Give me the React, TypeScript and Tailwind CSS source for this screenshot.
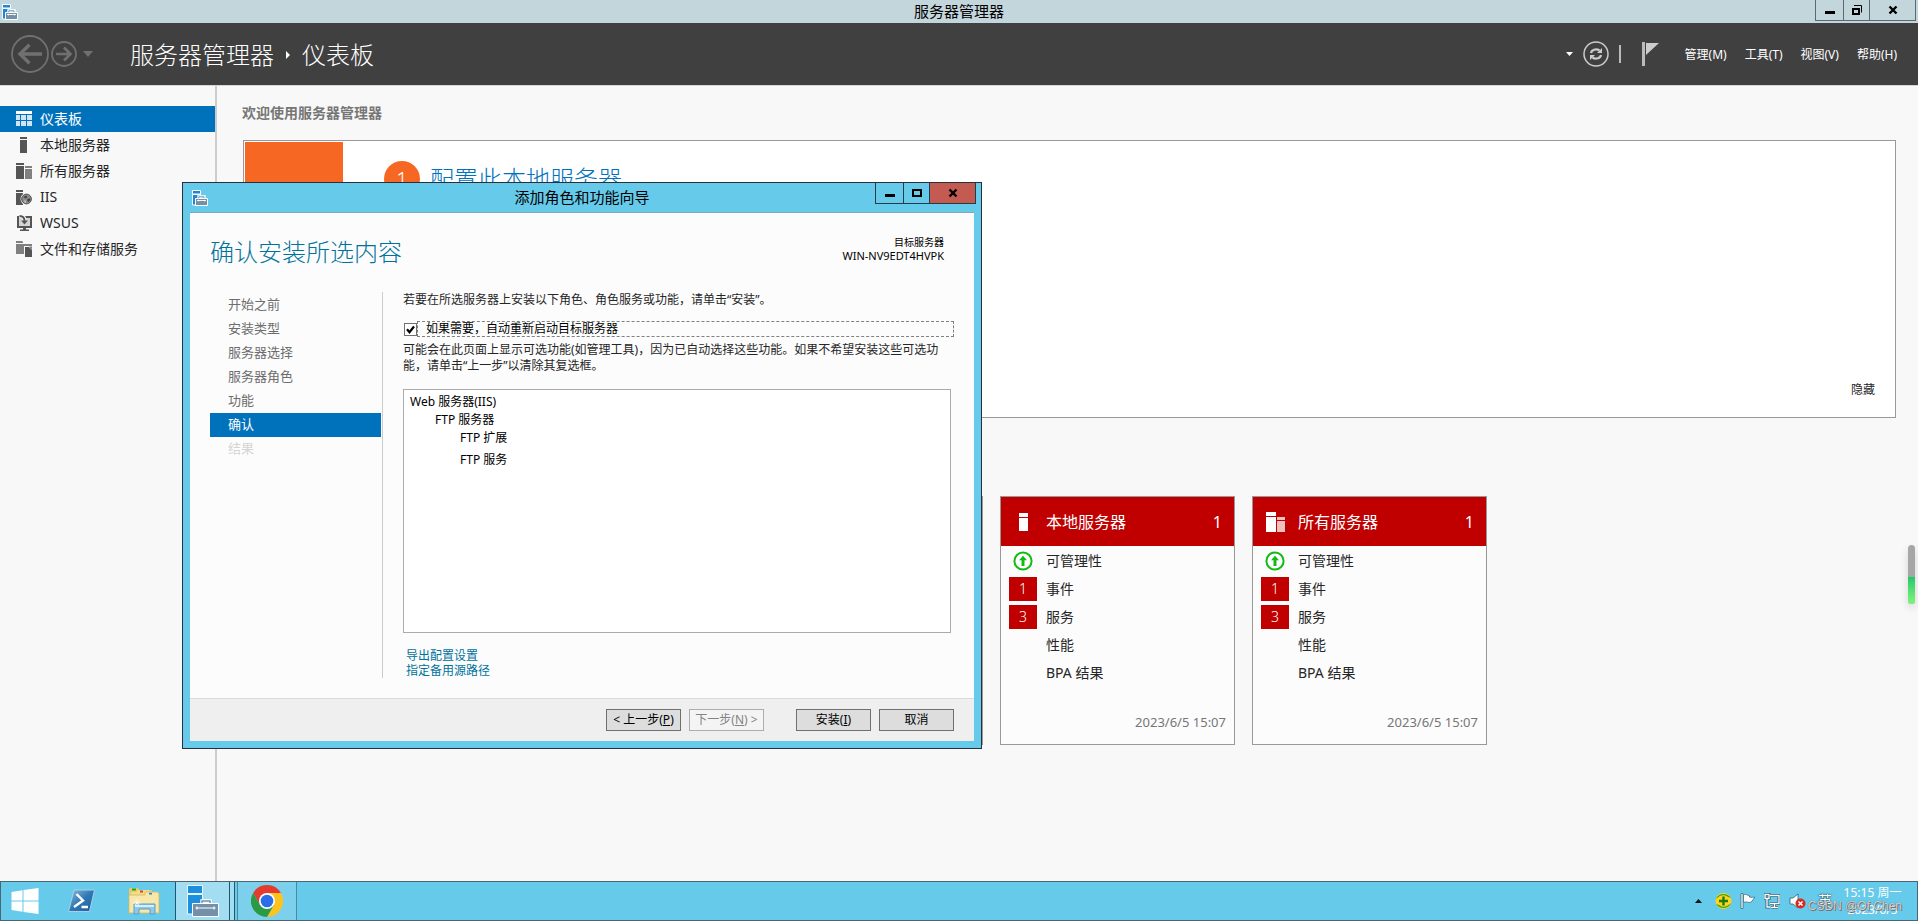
import type { ReactNode } from 'react'
import clsx from 'clsx'

const NAV_ITEMS = [
  { id: 'dashboard', label: '仪表板', active: true },
  { id: 'local', label: '本地服务器' },
  { id: 'all', label: '所有服务器' },
  { id: 'iis', label: 'IIS' },
  { id: 'wsus', label: 'WSUS' },
  { id: 'files', label: '文件和存储服务' },
]

const MENUS = ['管理(M)', '工具(T)', '视图(V)', '帮助(H)']

const STEPS = [
  { label: '开始之前' },
  { label: '安装类型' },
  { label: '服务器选择' },
  { label: '服务器角色' },
  { label: '功能' },
  { label: '确认', current: true },
  { label: '结果', disabled: true },
]

const TILES = [
  { id: 'local', title: '本地服务器', count: 1 },
  { id: 'all', title: '所有服务器', count: 1 },
]

const TILE_ROWS = [
  { label: '可管理性', ok: true },
  { label: '事件', badge: 1 },
  { label: '服务', badge: 3 },
  { label: '性能' },
  { label: 'BPA 结果' },
]

/* ── Icons ── */

function ToolboxIcon({ className }: { className?: string }) {
  return (
    <svg viewBox="0 0 16 16" className={className} aria-hidden="true">
      <path d="M0.500 0.500h8v3.500h-8zM0.500 4.500h8v10.500h-8z" fill="#1e87d6" stroke="#fff" />
      <path d="M6.500 8v-1.500h6V8" fill="none" stroke="#fff" strokeWidth="2.400" />
      <path d="M3.500 8.500h12v7h-12z" fill="#7390a8" stroke="#fff" />
      <path d="M6.800 8.200V6.800h5.200v1.400" fill="none" stroke="#7390a8" />
      <path d="M5 10.500h9M6.500 9.800v1.600M12.500 9.800v1.600" stroke="#fff" strokeWidth="0.900" />
    </svg>
  )
}

function NavIcon({ id }: { id: string }) {
  switch (id) {
    case 'dashboard':
      return (
        <svg width="16" height="16" viewBox="0 0 16 16" aria-hidden="true">
          <path fill="#fff" d="M0 0h16v3H0z" />
          <path fill="#cfe4f4" d="M0 4h4v5H0zM5 4h5v5H5zM11 4h5v5h-5zM0 10h4v5H0zM5 10h5v5H5zM11 10h5v5h-5z" />
        </svg>
      )
    case 'local':
      return (
        <svg width="16" height="16" viewBox="0 0 16 16" aria-hidden="true">
          <path fill="#555" d="M4 0h7v2H4zM4 3h7v13H4z" />
        </svg>
      )
    case 'all':
      return (
        <svg width="16" height="16" viewBox="0 0 16 16" aria-hidden="true">
          <path fill="#555" d="M0 0h8v2H0zM0 3h8v13H0z" />
          <path fill="#808080" d="M9 3h7v2H9zM9 6h7v10H9z" />
        </svg>
      )
    case 'iis':
      return (
        <svg width="16" height="16" viewBox="0 0 16 16" aria-hidden="true">
          <path fill="#555" d="M0 1h7v2H0zM0 4h7v12H0z" />
          <circle cx="10.500" cy="10" r="6" fill="#f8f8f8" />
          <circle cx="10.500" cy="10" r="4.900" fill="#8a8a8a" stroke="#555" />
          <path d="M7.500 8l2.700-1.500 1.200 1.800-2 1.300zM11 10.500l2.700-1.200.6 1.800-2.200 2.200z" fill="#3f3f3f" />
          <path d="M8 11l2 1v2l-1.500-.8z" fill="#c4c4c4" />
        </svg>
      )
    case 'wsus':
      return (
        <svg width="16" height="16" viewBox="0 0 16 16" aria-hidden="true">
          <path fill="#555" d="M1 1h15v12H1z" />
          <path fill="#555" d="M7 13h3v1.500h3V16H4v-1.500h3z" />
          <path fill="#d4d4d4" d="M3 3h11v8H3z" />
          <path d="M3 .8c3.800 0 5.500 1.700 5.500 5.200" fill="none" stroke="#f8f8f8" strokeWidth="4" />
          <path d="M3.500 1c3.500 0 5 1.500 5 5" fill="none" stroke="#555" strokeWidth="2" />
          <path fill="#555" d="M5 5.500h7L8.500 9.500z" />
        </svg>
      )
    default:
      return (
        <svg width="16" height="16" viewBox="0 0 16 16" aria-hidden="true">
          <path fill="#808080" d="M0 1V0h6l1 1v1H0zM0 3h16v2H8v8H0z" />
          <path fill="#f8f8f8" d="M8 5h8v11H8z" />
          <path fill="#555" d="M9 6h4l3 3v7H9z" />
          <path fill="#808080" d="M13 5.500h3V9z" />
        </svg>
      )
  }
}

function Caption({ dialog }: { dialog?: boolean }) {
  const line = dialog ? 'border-[#243c48]' : 'border-[#5a6a74]'
  return (
    <div className={clsx('absolute top-0 flex h-[21px] border-b border-l', line, dialog ? 'right-[5px]' : 'right-0.5')}>
      <button aria-label="最小化" className={clsx('flex w-7 items-center justify-center border-r', line)}>
        <svg width="10" height="10" viewBox="0 0 10 10">
          <path d="M0 6h10v3H0z" />
        </svg>
      </button>
      <button aria-label="最大化" className={clsx('flex w-[26px] items-center justify-center border-r', line)}>
        {dialog ? (
          <svg width="10" height="10" viewBox="0 0 10 10" fill="none">
            <path d="M1 2h8v6H1z" stroke="#000" strokeWidth="2" />
          </svg>
        ) : (
          <svg width="10" height="10" viewBox="0 0 10 10" fill="none">
            <path d="M1 4h6v5H1z" stroke="#000" strokeWidth="2" />
            <path d="M2 0.500h7.500v7" stroke="#000" />
          </svg>
        )}
      </button>
      <button
        aria-label="关闭"
        className={clsx('flex w-[46px] items-center justify-center border-r', line, dialog && 'bg-[#c35b52]')}
      >
        <svg width="10" height="10" viewBox="0 0 10 10">
          <path d="M1.500 1.500l7 7M8.500 1.500l-7 7" stroke="#000" strokeWidth="2.400" />
        </svg>
      </button>
    </div>
  )
}

/* ── Main window ── */

function Header() {
  return (
    <header className="flex h-[63px] items-center border-b border-[#d8d8d8] bg-[#404040] pl-[11px] text-white">
      <button aria-label="后退">
        <svg width="38" height="38" viewBox="0 0 38 38" fill="none" stroke="#707070">
          <circle cx="19" cy="19" r="18" strokeWidth="1.800" />
          <path d="M31 19H9M18.500 9.800L9 19l9.500 9.200" strokeWidth="3.400" />
        </svg>
      </button>
      <button aria-label="前进" className="ml-0.5">
        <svg width="26" height="26" viewBox="0 0 26 26" fill="none" stroke="#707070">
          <circle cx="13" cy="13" r="12" strokeWidth="1.800" />
          <path d="M5 13h14M13 6.500l6.500 6.500-6.500 6.500" strokeWidth="2.600" />
        </svg>
      </button>
      <svg width="10" height="6" viewBox="0 0 10 6" className="ml-1.5" aria-hidden="true">
        <path d="M0 0h10l-5 6z" fill="#707070" />
      </svg>
      <h1 className="ml-[37px] flex items-center pt-0.5 text-2xl font-light">
        服务器管理器
        <svg width="4" height="8" viewBox="0 0 4 8" className="mx-3" aria-hidden="true">
          <path d="M0 0l4 4-4 4z" fill="#fff" />
        </svg>
        仪表板
      </h1>

      <div className="ml-auto flex items-center pr-[21px]">
        <svg width="7" height="4" viewBox="0 0 7 4" aria-hidden="true">
          <path d="M0 0h7l-3.500 4z" fill="#fff" />
        </svg>
        <button aria-label="刷新" className="ml-2.5">
          <svg width="26" height="26" viewBox="0 0 26 26" fill="none" stroke="#ccc">
            <circle cx="13" cy="13" r="12" strokeWidth="1.500" />
            <path d="M8 12c.5-3 5-5 8.500-2.500M18 14c-.5 3-5 5-8.500 2.500" strokeWidth="2.200" />
            <path d="M19 7v5h-5zM7 19v-5h5z" fill="#ccc" stroke="none" />
          </svg>
        </button>
        <span className="ml-2.5 h-[18px] w-0.5 bg-[#bbb]" />
        <button aria-label="通知" className="ml-[21px]">
          <svg width="18" height="24" viewBox="0 0 18 24">
            <path d="M0 0h3v24H0z" fill="#bbb" />
            <path d="M4 1h13L4 13z" fill="#ccc" />
          </svg>
        </button>
        <nav className="ml-[25px] flex gap-[18px] pt-0.5 text-xs">
          {MENUS.map((menu) => (
            <button key={menu}>{menu}</button>
          ))}
        </nav>
      </div>
    </header>
  )
}

function Sidebar() {
  return (
    <nav className="w-[217px] shrink-0 border-r-2 border-[#ccc] pt-5">
      {NAV_ITEMS.map((item) => (
        <a
          key={item.id}
          href={`#${item.id}`}
          className={clsx(
            'flex h-[26px] items-center gap-2 pl-4 text-sm',
            item.active ? 'bg-[#0072bc] text-white' : 'text-[#262626]',
          )}
        >
          <NavIcon id={item.id} />
          {item.label}
        </a>
      ))}
    </nav>
  )
}

function TileIcon({ id }: { id: string }) {
  return id === 'local' ? (
    <svg width="20" height="20" viewBox="0 0 20 20" aria-hidden="true">
      <path fill="#fff" d="M6 1h9v4H6zM6 6h9v13H6z" />
    </svg>
  ) : (
    <svg width="20" height="20" viewBox="0 0 20 20" aria-hidden="true">
      <path fill="#fff" d="M1 0h10v4H1zM1 5h10v15H1z" />
      <path fill="#efc0c0" d="M12 5h8v3h-8zM12 9h8v11h-8z" />
    </svg>
  )
}

function Tile({ id, title, count }: { id: string; title: string; count: number }) {
  return (
    <section className="flex h-[249px] w-[235px] flex-col border border-[#999] bg-[#fcfcfc]">
      <h3 className="flex h-[49px] items-center bg-[#c00000] px-3 text-base text-white">
        <TileIcon id={id} />
        <span className="ml-[13px]">{title}</span>
        <span className="ml-auto">{count}</span>
      </h3>
      <ul className="pt-px text-sm text-[#262626]">
        {TILE_ROWS.map((row) => (
          <li key={row.label} className="flex h-7 items-center gap-[9px] pl-2">
            <span className="flex h-6 w-7 items-center justify-center">
              {row.ok && (
                <svg width="20" height="20" viewBox="0 0 20 20">
                  <circle cx="10" cy="10" r="8.600" fill="#fff" stroke="#12bb12" strokeWidth="2" />
                  <path d="M10 4.800l4 4.400h-2.500V15h-3V9.200H6z" fill="#12bb12" />
                </svg>
              )}
              {row.badge && (
                <span className="flex h-6 w-7 items-center justify-center bg-[#c00000] font-light text-white">
                  {row.badge}
                </span>
              )}
            </span>
            {row.label}
          </li>
        ))}
      </ul>
      <p className="mt-auto pr-2 pb-3 text-right text-[13px] text-[#767676]">2023/6/5 15:07</p>
    </section>
  )
}

function Dashboard() {
  return (
    <main className="flex min-w-0 flex-1 flex-col pr-[22px] pl-[25px]">
      <h2 className="pt-[17px] text-sm font-semibold text-[#767676]">欢迎使用服务器管理器</h2>
      <section className="mt-[17px] ml-px flex h-[278px] border border-[#999] bg-white p-px">
        <div className="w-[98px] bg-[#f56723]" />
        <div className="flex items-center gap-2.5 self-start pt-[19px] pl-[41px]">
          <span className="flex size-9 items-center justify-center rounded-full bg-[#f56723] text-xl font-light text-white">
            1
          </span>
          <a href="#configure" className="text-2xl font-light text-[#0072bc]">
            配置此本地服务器
          </a>
        </div>
        <button className="mr-[19px] mb-[18px] ml-auto self-end text-xs text-[#262626]">隐藏</button>
      </section>
      <div className="mt-[78px] flex gap-[17px] pl-0.5">
        {/* role groups still loading */}
        {[0, 1, 2].map((n) => (
          <section key={n} className="h-[249px] w-[235px] border border-[#999] bg-[#fcfcfc]" />
        ))}
        {TILES.map((tile) => (
          <Tile key={tile.id} {...tile} />
        ))}
      </div>
    </main>
  )
}

/* ── Add roles wizard ── */

function WizardButton({ children, disabled, className }: { children: ReactNode; disabled?: boolean; className?: string }) {
  return (
    <button
      disabled={disabled}
      className={clsx(
        'h-[22px] w-[75px] border text-xs whitespace-nowrap',
        disabled ? 'border-[#adadad] bg-[#f4f4f4] text-[#838383]' : 'border-[#707070] bg-[#ddd] text-black',
        className,
      )}
    >
      {children}
    </button>
  )
}

function Wizard() {
  return (
    <div
      role="dialog"
      aria-labelledby="wizard-title"
      className="absolute top-[182px] left-[182px] flex h-[567px] w-[800px] flex-col border border-[#2b2f3a] bg-[#66caea] px-[7px] pb-[7px]"
    >
      <div className="flex h-[29px] items-center pl-0.5">
        <ToolboxIcon className="size-4" />
        <h2 id="wizard-title" className="flex-1 pr-[18px] text-center text-[15px] text-black">
          添加角色和功能向导
        </h2>
        <Caption dialog />
      </div>

      <div className="flex flex-1 flex-col border-t border-[#7fa9bc] bg-[#fcfcfc]">
        <div className="flex items-start justify-between pt-[23px] pr-[30px] pl-5">
          <h3 className="text-2xl font-light text-[#00739c]">确认安装所选内容</h3>
          <p className="flex flex-col text-right text-[10px] leading-[13px] text-black">
            <span>目标服务器</span>
            <span className="text-[11px] leading-[13px]">WIN-NV9EDT4HVPK</span>
          </p>
        </div>

        <div className="mt-6 flex h-[386px] px-5">
          <ol className="w-[173px] shrink-0 border-r border-[#ccc] pt-px pr-px text-[13px]">
            {STEPS.map((step) => (
              <li
                key={step.label}
                className={clsx(
                  'flex h-6 items-center pl-[18px]',
                  step.current && 'bg-[#0072bc] text-white',
                  step.disabled && 'text-[#d4d4d4]',
                  !step.current && !step.disabled && 'text-[#6d6d6d]',
                )}
              >
                {step.label}
              </li>
            ))}
          </ol>

          <div className="flex flex-1 flex-col pl-5 text-xs text-[#262626]">
            <p className="leading-4">若要在所选服务器上安装以下角色、角色服务或功能，请单击“安装”。</p>
            <div className="mt-[13px] flex h-4 items-center pl-px">
              <span className="relative flex size-[13px]">
                <input
                  id="auto-restart"
                  type="checkbox"
                  defaultChecked
                  className="peer size-[13px] appearance-none border border-[#707070] bg-white"
                />
                <svg
                  viewBox="0 0 13 13"
                  className="pointer-events-none absolute inset-0 hidden peer-checked:block"
                  aria-hidden="true"
                >
                  <path d="M3 6.200l2.500 3L10 3.500" fill="none" stroke="#000" strokeWidth="2.200" />
                </svg>
              </span>
              <label
                htmlFor="auto-restart"
                className="h-4 flex-1 border border-dashed border-[#808080] pl-2 leading-3.5 text-black"
              >
                如果需要，自动重新启动目标服务器
              </label>
            </div>
            <p className="mt-[5px] leading-4">
              可能会在此页面上显示可选功能(如管理工具)，因为已自动选择这些功能。如果不希望安装这些可选功能，请单击“上一步”以清除其复选框。
            </p>
            <ul className="mt-[15px] mr-[3px] h-[244px] border border-[#ababab] bg-white pt-[3px] pl-1.5 leading-[18px] text-black">
              <li>Web 服务器(IIS)</li>
              <li className="pl-[25px]">FTP 服务器</li>
              <li className="pl-[50px]">FTP 扩展</li>
              <li className="mt-1 pl-[50px]">FTP 服务</li>
            </ul>
            <div className="mt-[15px] flex flex-col items-start pl-[3px] leading-[15px] text-[#00739c]">
              <a href="#export">导出配置设置</a>
              <a href="#source">指定备用源路径</a>
            </div>
          </div>
        </div>

        <footer className="mt-auto flex h-[43px] items-center justify-end border-t border-[#d9d9d9] bg-[#efefef] pr-5">
          <WizardButton>
            &lt; 上一步(<u>P</u>)
          </WizardButton>
          <WizardButton disabled className="ml-2">
            下一步(<u>N</u>) &gt;
          </WizardButton>
          <WizardButton className="ml-8">
            安装(<u>I</u>)
          </WizardButton>
          <WizardButton className="ml-2">取消</WizardButton>
        </footer>
      </div>
    </div>
  )
}

/* ── Taskbar ── */

function PowerShellIcon() {
  return (
    <svg width="30" height="24" viewBox="0 0 30 24" aria-hidden="true">
      <defs>
        <linearGradient id="ps" x1="0" y1="0" x2="1" y2="1">
          <stop offset="0" stopColor="#8fc0de" />
          <stop offset="0.5" stopColor="#2f77b4" />
          <stop offset="1" stopColor="#1f5aa0" />
        </linearGradient>
      </defs>
      <path d="M8 1h20.500L23.500 22.500H2.500z" fill="url(#ps)" stroke="#a9cfe6" strokeLinejoin="round" />
      <path d="M10.500 5l6.500 6.500-9 6.500M15.500 18h6.500" fill="none" stroke="#fff" strokeWidth="2.400" />
    </svg>
  )
}

function ExplorerIcon() {
  return (
    <svg width="32" height="28" viewBox="0 0 32 28" aria-hidden="true">
      <path d="M2 1h8l1 2h13v20H1V2z" fill="#e9c969" />
      <path d="M4 1.500h4v2H4z" fill="#12b012" />
      <path d="M9 3h12l1 2h8v20H3V5h6z" fill="#f2dc8f" />
      <path d="M12 3.500h3v2h-3z" fill="#d0442a" />
      <path d="M17 5h13l1 2v19H1V8h16z" fill="#f7e7ab" stroke="#d9b85a" strokeWidth="0.800" />
      <path d="M21 5.800h3v1.700h-3z" fill="#1a8fe0" />
      <path d="M6 17h21v10h-5v-5H11v5H6z" fill="#8fc9ea" stroke="#5a9fc8" />
      <path d="M7 18h19v2H7z" fill="#d5effb" />
      <path d="M9 12v8M5 16h8M6.500 13.500l5 5M11.500 13.500l-5 5" stroke="#fff" strokeWidth="0.700" />
    </svg>
  )
}

function ChromeIcon() {
  return (
    <svg width="32" height="32" viewBox="0 0 32 32" aria-hidden="true">
      <path d="M16 8h13.860A16 16 0 0 1 16 32l6.930-12z" fill="#fcc31e" />
      <path d="M16 8H29.860A16 16 0 0 0 2.140 8l6.930 12z" fill="#e33b2e" />
      <path d="M9.070 20L2.140 8A16 16 0 0 0 16 32l6.930-12z" fill="#2b9a45" />
      <circle cx="16" cy="16" r="8" fill="#fff" />
      <circle cx="16" cy="16" r="6.300" fill="#2a6de8" />
    </svg>
  )
}

function Taskbar() {
  return (
    <footer className="flex h-10 border border-[#4d6570] bg-[#66caea]">
      <button aria-label="开始" className="flex w-12 items-center justify-center">
        <svg width="28" height="26" viewBox="0 0 28 26" fill="#fff">
          <path d="M0.500 4L11.500 2.300V12.500H0.500zM12.500 2.100L27.500 0V12.500H12.500zM0.500 13.500H11.500V23.700L0.500 22zM12.500 13.500H27.500V26L12.500 23.900z" />
        </svg>
      </button>
      <button aria-label="PowerShell" className="flex w-16 items-center justify-center">
        <PowerShellIcon />
      </button>
      <button aria-label="文件资源管理器" className="flex w-[62px] items-center justify-center">
        <ExplorerIcon />
      </button>
      <button
        aria-label="服务器管理器"
        className="flex w-[60px] items-center border-x border-[#23566b] bg-[#a3ddf2]"
      >
        <span className="flex h-full w-[54px] items-center justify-center border-r border-[#23566b]">
          <svg width="32" height="33" viewBox="0 0 32 33" aria-hidden="true">
            <path d="M0.500 0.500h15v8h-15zM0.500 9.500h15V29h-15z" fill="#1e8fdd" stroke="#e6f6fc" />
            <path d="M15 18v-2h8v2" fill="none" stroke="#fff" strokeWidth="3.500" />
            <path d="M5.500 18.500h26v13h-26z" fill="#7390a8" stroke="#fff" />
            <path d="M15 18v-2h8v2" fill="none" stroke="#7390a8" strokeWidth="1.500" />
            <path d="M8.500 23h20M10 21.500v3M27 21.500v3" stroke="#fff" strokeWidth="1.200" />
          </svg>
        </span>
      </button>
      <button
        aria-label="Chrome"
        className="ml-0.5 flex w-[60px] items-center justify-center border-x border-[#4589a3] bg-[#7dd0ec]"
      >
        <ChromeIcon />
      </button>

      <div className="ml-auto flex items-center pr-3.5">
        <svg width="7" height="4" viewBox="0 0 7 4" aria-hidden="true">
          <path d="M3.500 0L7 4H0z" fill="#111" />
        </svg>
        <svg width="17" height="16" viewBox="0 0 17 16" className="ml-[13px]" aria-hidden="true">
          <circle cx="8.500" cy="8" r="8" fill="#ffd51c" />
          <path d="M1 6C3 0 12-1 16 5l-3-1C9 1 5 2 1 6zM16 10c-2 6-11 7-15 1l3 1c4 3 8 2 12-2z" fill="#3fa51e" />
          <path d="M8.500 3.500v9M4 8h9" stroke="#1e7a14" strokeWidth="2.400" />
        </svg>
        <svg width="16" height="16" viewBox="0 0 16 16" className="ml-2" aria-hidden="true">
          <path d="M1 0.500h2v15H1z" fill="#fff" stroke="#2f5f72" strokeWidth="0.700" />
          <path
            d="M3.500 1.500c3-.8 4 1 6 1.300V4c2 .8 4 0 5.500.3-2 1.200-2 4-4.500 5-2 .6-4-1-7 0z"
            fill="#fff"
            stroke="#2f5f72"
            strokeWidth="0.700"
          />
        </svg>
        <svg width="16" height="16" viewBox="0 0 16 16" className="ml-2" fill="none" aria-hidden="true">
          <path d="M6 2.500h9v8H6M10.500 11v3M7 14.500h7" stroke="#2f5f72" strokeWidth="3" />
          <path d="M1 1.500h4v4H1zM3 5.500v8.500h3" stroke="#2f5f72" strokeWidth="3" />
          <path d="M6 2.500h9v8H6M10.500 11v3M7 14.500h7" stroke="#fff" strokeWidth="1.300" />
          <path d="M1 1.500h4v4H1zM3 5.500v8.500h3" stroke="#fff" strokeWidth="1.300" />
        </svg>
        <svg width="17" height="16" viewBox="0 0 17 16" className="ml-[9px]" aria-hidden="true">
          <path d="M1 5h3l5-4v14l-5-4H1z" fill="#fff" stroke="#2f5f72" strokeWidth="0.800" />
          <circle cx="11.500" cy="10.500" r="5" fill="#d9281e" />
          <path d="M9.500 8.500l4 4M13.500 8.500l-4 4" stroke="#fff" strokeWidth="1.500" />
        </svg>
        <span className="ml-3 text-sm text-white [text-shadow:0_0_2px_#1d3b48,0_0_1px_#1d3b48]">英</span>
        <div className="ml-2.5 w-[61px] text-center text-xs leading-[17px] text-white">
          <p>15:15 周一</p>
          <p>2023/6/5</p>
        </div>
      </div>
    </footer>
  )
}

export default function App() {
  return (
    <div className="relative flex min-h-screen flex-col bg-[#f8f8f8] font-['Noto_Sans','Noto_Sans_CJK_SC',sans-serif]">
      <div className="relative flex h-[23px] items-center bg-[#c3d6dc] pl-0.5">
        <ToolboxIcon className="size-4" />
        <p className="flex-1 pr-[18px] text-center text-[15px] text-black">服务器管理器</p>
        <Caption />
      </div>
      <Header />
      <div className="flex flex-1">
        <Sidebar />
        <Dashboard />
      </div>
      <Taskbar />

      <Wizard />

      {/* floating scroll indicator */}
      <div className="absolute top-[545px] right-[3px] h-[59px] w-[7px] overflow-hidden rounded-full bg-[#a6a6a6] shadow-[0_4px_8px_rgba(0,0,0,0.15)]">
        <div className="mt-8 h-[27px] bg-linear-to-b from-[#1fc96a] to-[#7cf57c]" />
      </div>

      <p className="pointer-events-none absolute right-4 bottom-1.5 font-['Liberation_Sans',sans-serif] text-xs leading-[18px] whitespace-nowrap text-white/70 [text-shadow:0_0_1px_#555,1px_1px_0_#777]">
        CSDN @Of Chen
      </p>
    </div>
  )
}
